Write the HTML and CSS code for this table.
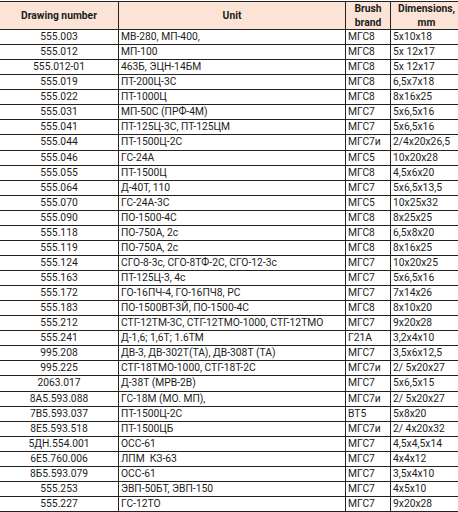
FILE: index.html
```
<!DOCTYPE html>
<html>
<head>
<meta charset="utf-8">
<link rel="stylesheet" href="styles.css">
</head>
<body>
<div class="sheet">
  <div class="hd">Drawing number</div><div class="hd">Unit</div><div class="hd">Brush<br>brand</div><div class="hd">Dimensions,<br>mm</div>
  <div class="c num">555.003</div><div class="c">МВ-280, МП-400,</div><div class="c">МГС8</div><div class="c">5x10x18</div>
  <div class="c num">555.012</div><div class="c">МП-100</div><div class="c">МГС8</div><div class="c">5x 12x17</div>
  <div class="c num">555.012-01</div><div class="c">463Б, ЭЦН-14БМ</div><div class="c">МГС8</div><div class="c">5x 12x17</div>
  <div class="c num">555.019</div><div class="c">ПТ-200Ц-3С</div><div class="c">МГС8</div><div class="c">6,5x7x18</div>
  <div class="c num">555.022</div><div class="c">ПТ-1000Ц</div><div class="c">МГС8</div><div class="c">8x16x25</div>
  <div class="c num">555.031</div><div class="c">МП-50С (ПРФ-4М)</div><div class="c">МГС7</div><div class="c">5x6,5x16</div>
  <div class="c num">555.041</div><div class="c">ПТ-125Ц-3С, ПТ-125ЦМ</div><div class="c">МГС7</div><div class="c">5x6,5x16</div>
  <div class="c num">555.044</div><div class="c">ПТ-1500Ц-2С</div><div class="c">МГС7и</div><div class="c">2/4x20x26,5</div>
  <div class="c num">555.046</div><div class="c">ГС-24А</div><div class="c">МГС5</div><div class="c">10x20x28</div>
  <div class="c num">555.055</div><div class="c">ПТ-1500Ц</div><div class="c">МГС8</div><div class="c">4,5x6x20</div>
  <div class="c num">555.064</div><div class="c">Д-40Т, 110</div><div class="c">МГС7</div><div class="c">5x6,5x13,5</div>
  <div class="c num">555.070</div><div class="c">ГС-24А-3С</div><div class="c">МГС5</div><div class="c">10x25x32</div>
  <div class="c num">555.090</div><div class="c">ПО-1500-4С</div><div class="c">МГС8</div><div class="c">8x25x25</div>
  <div class="c num">555.118</div><div class="c">ПО-750А, 2с</div><div class="c">МГС8</div><div class="c">6,5x8x20</div>
  <div class="c num">555.119</div><div class="c">ПО-750А, 2с</div><div class="c">МГС8</div><div class="c">8x16x25</div>
  <div class="c num">555.124</div><div class="c">СГО-8-3с, СГО-8ТФ-2С, СГО-12-3с</div><div class="c">МГС7</div><div class="c">10x20x25</div>
  <div class="c num">555.163</div><div class="c">ПТ-125Ц-3, 4с</div><div class="c">МГС7</div><div class="c">5x6,5x16</div>
  <div class="c num">555.172</div><div class="c">ГО-16ПЧ-4, ГО-16ПЧ8, РС</div><div class="c">МГС7</div><div class="c">7x14x26</div>
  <div class="c num">555.183</div><div class="c">ПО-1500ВТ-3Й, ПО-1500-4С</div><div class="c">МГС8</div><div class="c">8x10x20</div>
  <div class="c num">555.212</div><div class="c">СТГ-12ТМ-3С, СТГ-12ТМО-1000, СТГ-12ТМО</div><div class="c">МГС7</div><div class="c">9x20x28</div>
  <div class="c num">555.241</div><div class="c">Д-1,6; 1,6Т; 1.6ТМ</div><div class="c">Г21А</div><div class="c">3,2x4x10</div>
  <div class="c num">995.208</div><div class="c">ДВ-3, ДВ-302Т(ТА), ДВ-308Т (ТА)</div><div class="c">МГС7</div><div class="c">3,5x6x12,5</div>
  <div class="c num">995.225</div><div class="c">СТГ-18ТМО-1000, СТГ-18Т-2С</div><div class="c">МГС7и</div><div class="c">2/ 5x20x27</div>
  <div class="c num">2063.017</div><div class="c">Д-38Т (МРВ-2В)</div><div class="c">МГС7</div><div class="c">5x6,5x15</div>
  <div class="c num">8А5.593.088</div><div class="c">ГС-18М (МО. МП),</div><div class="c">МГС7и</div><div class="c">2/ 5x20x27</div>
  <div class="c num">7В5.593.037</div><div class="c">ПТ-1500Ц-2С</div><div class="c">ВТ5</div><div class="c">5x8x20</div>
  <div class="c num">8Е5.593.518</div><div class="c">ПТ-1500ЦБ</div><div class="c">МГС7и</div><div class="c">2/ 4x20x32</div>
  <div class="c num">5ДН.554.001</div><div class="c">ОСС-61</div><div class="c">МГС7</div><div class="c">4,5x4,5x14</div>
  <div class="c num">6Е5.760.006</div><div class="c">ЛПМ&nbsp; КЗ-63</div><div class="c">МГС7</div><div class="c">4x4x12</div>
  <div class="c num">8Б5.593.079</div><div class="c">ОСС-61</div><div class="c">МГС7</div><div class="c">3,5x4x10</div>
  <div class="c num">555.253</div><div class="c">ЭВП-50БТ, ЭВП-150</div><div class="c">МГС7</div><div class="c">4x5x10</div>
  <div class="c num">555.227</div><div class="c">ГС-12ТО</div><div class="c">МГС7</div><div class="c">9x20x28</div>
</div>
</body>
</html>
```
FILE: styles.css
```
html, body {
  margin: 0;
  padding: 0;
  background: #ffffff;
  overflow: hidden;
}
body {
  width: 458px;
  height: 512px;
  font-family: Roboto, "Liberation Sans", sans-serif;
  font-size: 10.3px;
  color: #1c1c1c;
}
.sheet {
  margin-top: 1px;
  width: 463px;
  display: grid;
  grid-template-columns: 119px 227px 45px 72px;
  grid-template-rows: 28px;
  grid-auto-rows: 15.07px;
  border-top: 1px solid #222;
}
.hd {
  background: #fbe4d5;
  font-weight: bold;
  text-align: center;
  line-height: 14px;
  display: flex;
  align-items: center;
  justify-content: center;
  border-right: 1px solid #222;
  border-bottom: 1px solid #222;
  box-sizing: border-box;
  white-space: nowrap;
}
.c {
  box-sizing: border-box;
  border-right: 1px solid #222;
  border-bottom: 1px solid #222;
  padding-left: 2px;
  white-space: nowrap;
  overflow: hidden;
  line-height: 14px;
}
.num {
  text-align: center;
  padding-left: 0;
}
```
